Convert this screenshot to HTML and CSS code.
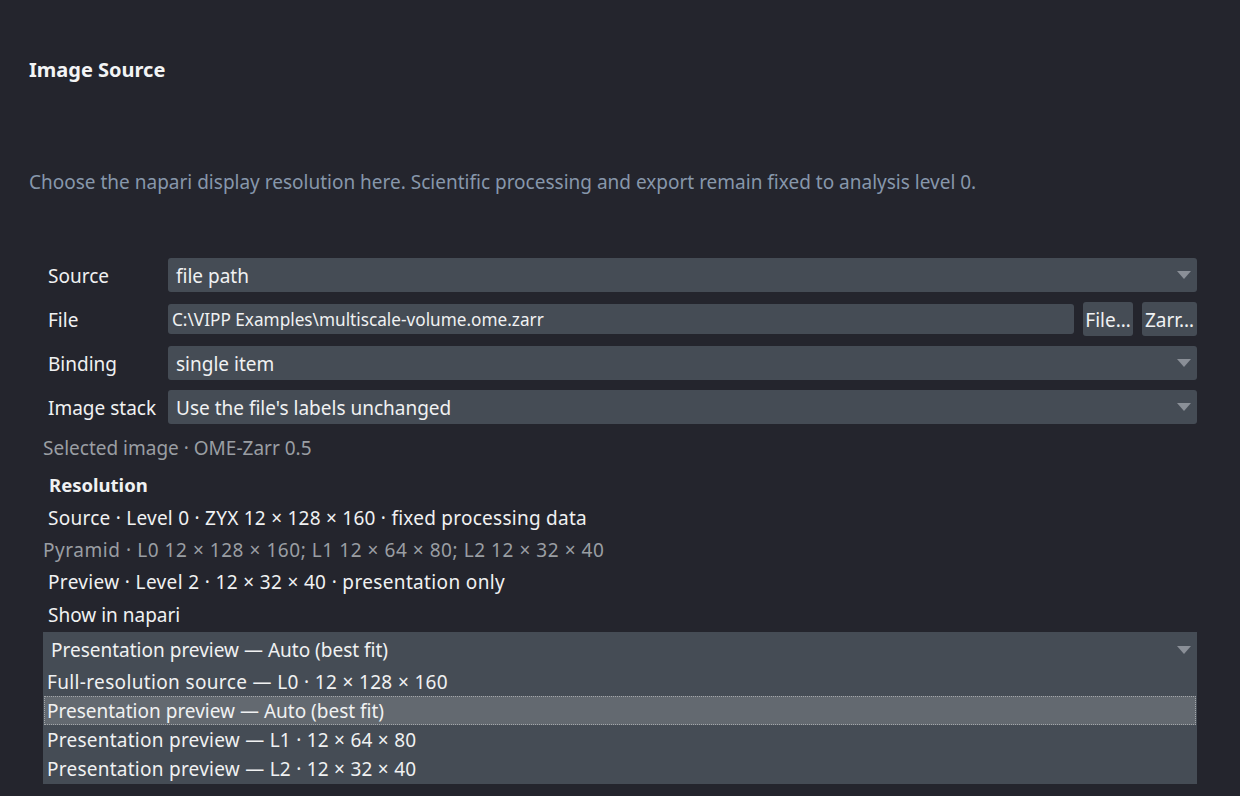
FILE: index.html
```html
<!DOCTYPE html>
<html lang="en">
<head>
<meta charset="utf-8">
<title>Image Source</title>
<link rel="stylesheet" href="styles.css">
</head>
<body>
<div class="page">
  <h1 class="title">Image Source</h1>
  <p class="desc">Choose the napari display resolution here. Scientific processing and export remain fixed to analysis level 0.</p>
  <div class="panel">
    <div class="form">
      <div class="label">Source</div>
      <div class="combo"><span>file path</span><i class="arrow"></i></div>

      <div class="label">File</div>
      <div class="file-row">
        <div class="lineedit">C:\VIPP Examples\multiscale-volume.ome.zarr</div>
        <div class="btn btn-file">File…</div>
        <div class="btn btn-zarr">Zarr…</div>
      </div>

      <div class="label">Binding</div>
      <div class="combo"><span>single item</span><i class="arrow"></i></div>

      <div class="label">Image stack</div>
      <div class="combo"><span>Use the file's labels unchanged</span><i class="arrow"></i></div>
    </div>

    <div class="info muted selected">Selected image · OME-Zarr 0.5</div>
    <div class="info strong resolution">Resolution</div>
    <div class="info indent nums src">Source · Level 0 · ZYX 12 × 128 × 160 · fixed processing data</div>
    <div class="info muted nums-wide pyr">Pyramid · L0 12 × 128 × 160; L1 12 × 64 × 80; L2 12 × 32 × 40</div>
    <div class="info indent nums-list prev">Preview · Level 2 · 12 × 32 × 40 · presentation only</div>
    <div class="info indent show">Show in napari</div>

    <div class="open-combo">
      <div class="open-head"><span>Presentation preview — Auto (best fit)</span><i class="arrow"></i></div>
      <ul class="list">
        <li class="nums-list">Full-resolution source — L0 · 12 × 128 × 160</li>
        <li class="current">Presentation preview — Auto (best fit)</li>
        <li class="nums">Presentation preview — L1 · 12 × 64 × 80</li>
        <li class="nums">Presentation preview — L2 · 12 × 32 × 40</li>
      </ul>
    </div>
  </div>
</div>
</body>
</html>
```

FILE: styles.css
```css
html, body {
  margin: 0;
  padding: 0;
  background: #24252d;
}
body {
  width: 1240px;
  height: 796px;
  overflow: hidden;
  font-family: "Noto Sans", "Open Sans", sans-serif;
  font-size: 19px;
  color: #f0f1f2;
}
.page {
  padding-left: 29px;
  width: 1168px;
}
.title {
  margin: 56px 0 0 0;
  font-size: 20px;
  line-height: 28px;
  font-weight: 700;
  color: #f3f4f5;
}
.desc {
  margin: 84px 0 0 0;
  line-height: 28px;
  color: #8797ab;
}
.panel {
  margin: 62px 0 0 14px;
  width: 1154px;
}
.form {
  display: grid;
  grid-template-columns: 125px 1fr;
  row-gap: 10px;
}
.label {
  padding-left: 5px;
  height: 34px;
  line-height: 36px;
}
.combo {
  position: relative;
  height: 34px;
  line-height: 36px;
  background: #454c55;
  border-radius: 3px;
  padding-left: 8px;
}
.arrow {
  position: absolute;
  right: 6px;
  top: 13px;
  width: 0;
  height: 0;
  border-left: 7px solid transparent;
  border-right: 7px solid transparent;
  border-top: 8px solid #8a8f97;
}
.file-row {
  display: flex;
  align-items: center;
  gap: 9px;
  height: 34px;
}
.lineedit {
  flex: 1;
  height: 30px;
  line-height: 31px;
  background: #454c55;
  border-radius: 3px;
  padding-left: 4px;
  font-size: 17.2px;
}
.btn {
  height: 34px;
  line-height: 36px;
  background: #454c55;
  border-radius: 3px;
  text-align: center;
  font-size: 19px;
  white-space: nowrap;
  overflow: visible;
}
.btn-file { width: 50px; }
.btn-zarr { width: 55px; }
.info {
  line-height: 24px;
}
.muted { color: #9a9ea3; }
.indent { padding-left: 5px; }
.strong { font-weight: 700; font-size: 18.5px; padding-left: 6px; }
.nums { letter-spacing: 0.25px; }
.nums-list { letter-spacing: 0.35px; }
.nums-wide { letter-spacing: 0.55px; }
.selected { margin-top: 12px; }
.resolution { margin-top: 13px; }
.src { margin-top: 9px; }
.pyr { margin-top: 8px; }
.prev { margin-top: 8px; }
.show { margin-top: 9px; }
.open-combo {
  margin-top: 5px;
  background: #454c55;
  height: 152px;
}
.open-head {
  position: relative;
  height: 35px;
  line-height: 37px;
  padding-left: 8px;
}
.open-head .arrow {
  top: 14px;
  right: 6px;
}
.list {
  list-style: none;
  margin: 0;
  padding: 0;
}
.list li {
  height: 29px;
  line-height: 31px;
  padding-left: 4px;
}
.list li.current {
  margin: 0 1px;
  padding-left: 2px;
  height: 27px;
  line-height: 29px;
  background: #636970;
  border: 1px dotted #a3a6aa;
}
```
